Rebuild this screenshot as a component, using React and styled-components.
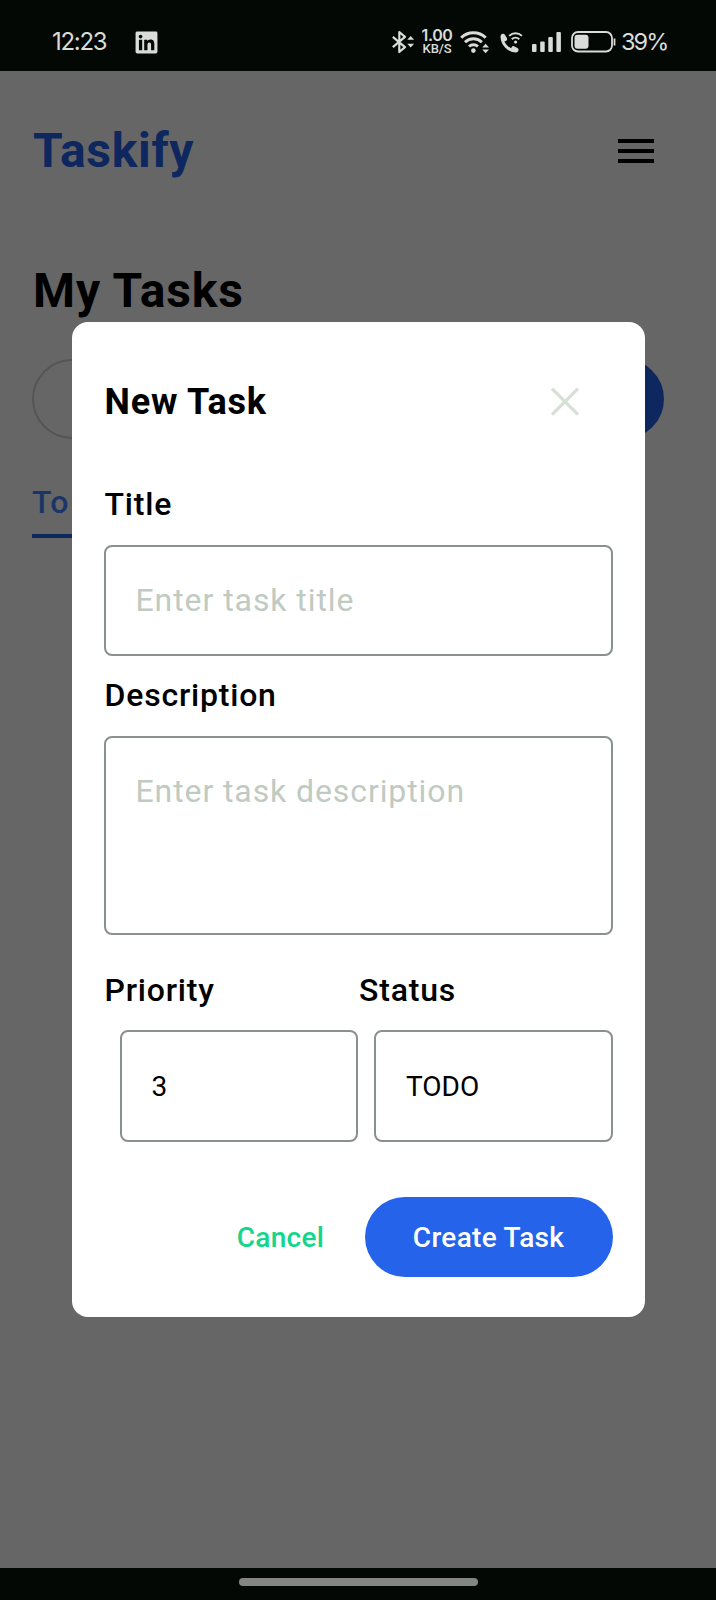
import React from "react";
import styled, { createGlobalStyle } from "styled-components";
import { FaLinkedin } from "react-icons/fa6";

const GlobalStyle = createGlobalStyle`
  * { box-sizing: border-box; }
  body { margin: 0; background: #040804; }
  button, input, textarea { font: inherit; }
`;

const Screen = styled.div`
  width: 716px;
  height: 1600px;
  display: flex;
  flex-direction: column;
  overflow: hidden;
  background: #040804;
  font-family: Roboto, sans-serif;
  color: #000;
`;

const StatusBar = styled.header`
  flex: none;
  height: 71px;
  padding: 13px 49px 0 52px;
  display: flex;
  align-items: center;
  justify-content: space-between;
  color: #d9dcd9;
  font-family: Inter, sans-serif;
  font-size: 24px;
  line-height: 30px;
`;

const StatusGroup = styled.div`
  display: flex;
  align-items: center;
`;

const StatusItem = styled.div`
  display: flex;
  margin-left: ${(p) => p.$before || 0}px;
`;

const Clock = styled.span`
  width: 56px;
  letter-spacing: -1.3px;
  white-space: nowrap;
`;

const NetSpeed = styled.div`
  width: 32px;
  display: flex;
  flex-direction: column;
  align-items: center;
  white-space: nowrap;
`;

const SpeedValue = styled.span`
  font-size: 16px;
  line-height: 13px;
  font-weight: 600;
  letter-spacing: -0.4px;
`;

const SpeedUnit = styled.span`
  font-family: Roboto, sans-serif;
  font-size: 13px;
  line-height: 13px;
  font-weight: 500;
  letter-spacing: -0.1px;
`;

const BatteryLevel = styled.span`
  width: 46px;
  font-size: 23.5px;
  letter-spacing: -1.9px;
  white-space: nowrap;
`;

const AppArea = styled.main`
  position: relative;
  flex: 1;
  background: #fff;
  padding: 0 32px;
`;

const TopBar = styled.div`
  height: 159px;
  padding: 0 24px 0 1px;
  display: flex;
  align-items: center;
  justify-content: space-between;
`;

const Brand = styled.h1`
  margin: 0;
  font-size: 48px;
  line-height: 64px;
  font-weight: 700;
  letter-spacing: 0.7px;
  color: #2563eb;
`;

const Heading = styled.h2`
  margin: 29px 0 36px 1px;
  font-size: 48px;
  line-height: 64px;
  font-weight: 700;
  letter-spacing: 0.9px;
`;

const ActionRow = styled.div`
  display: flex;
  gap: 16px;
  padding-right: 20px;
`;

const ActionPill = styled.div`
  flex: 1;
  height: 80px;
  border-radius: 40px;
  border: 2px solid ${(p) => (p.$filled ? "#2563eb" : "#d4d4d4")};
  background: ${(p) => (p.$filled ? "#2563eb" : "transparent")};
`;

const Tab = styled.div`
  width: 120px;
  margin-top: 31px;
  padding-top: 8px;
  height: 68px;
  border-bottom: 4px solid #2563eb;
  font-size: 32px;
  line-height: 48px;
  font-weight: 500;
  letter-spacing: 0.8px;
  color: #4484ff;
  white-space: nowrap;
`;

const Scrim = styled.div`
  position: absolute;
  inset: 0;
  display: flex;
  align-items: center;
  justify-content: center;
  background: rgba(0, 0, 0, 0.6);
`;

const Dialog = styled.form`
  width: 573px;
  height: 995px;
  padding: 33px 32px 40px;
  border-radius: 16px;
  background: #fff;
  display: flex;
  flex-direction: column;
`;

const DialogHeader = styled.div`
  height: 94px;
  margin-bottom: 31px;
  padding: 0 24px 0 1px;
  display: flex;
  align-items: center;
  justify-content: space-between;
`;

const DialogTitle = styled.h3`
  margin: 0;
  font-size: 36px;
  line-height: 48px;
  font-weight: 700;
  letter-spacing: 0.8px;
`;

const FieldGroup = styled.div`
  display: flex;
  flex-direction: column;
  flex: ${(p) => (p.$half ? "1" : "none")};
  margin-bottom: ${(p) => p.$gap || 0}px;
`;

const Label = styled.label`
  font-size: 32px;
  line-height: 48px;
  font-weight: 500;
  letter-spacing: 0.8px;
  padding-left: 1px;
  margin-bottom: ${(p) => p.$gap || 17}px;
`;

const inputBox = `
  display: block;
  width: 100%;
  border: 2px solid #89908d;
  border-radius: 8px;
  background: transparent;
  outline: none;
  resize: none;
  color: #000;
  &::placeholder { color: #bfcac1; opacity: 1; }
`;

const TextInput = styled.input`
  ${inputBox}
  height: 111px;
  padding: 0 30px 1px;
  font-size: 32px;
  letter-spacing: 0.93px;
`;

const TextArea = styled.textarea`
  ${inputBox}
  height: 199px;
  padding: 29px 30px;
  font-size: 32px;
  line-height: 48px;
  letter-spacing: 0.9px;
`;

const SelectBox = styled.div`
  ${inputBox}
  width: auto;
  height: 112px;
  margin-left: 16px;
  padding: 2px 30px 0;
  display: flex;
  align-items: center;
  font-size: 28px;
  line-height: 40px;
`;

const FieldRow = styled.div`
  display: flex;
  margin-bottom: 55px;
`;

const Actions = styled.div`
  display: flex;
  justify-content: flex-end;
  align-items: center;
`;

const Button = styled.button`
  height: 80px;
  border: 0;
  border-radius: 40px;
  padding: 0;
  width: ${(p) => (p.$primary ? 248 : 168)}px;
  background: ${(p) => (p.$primary ? "#2563eb" : "transparent")};
  color: ${(p) => (p.$primary ? "#fff" : "#13d68c")};
  font-size: 28px;
  font-weight: 500;
  letter-spacing: 0.3px;
`;

const NavBar = styled.footer`
  flex: none;
  height: 32px;
  padding-top: 10px;
  display: flex;
  justify-content: center;
`;

const GestureHandle = styled.div`
  width: 239px;
  height: 8px;
  border-radius: 4px;
  background: #838682;
`;

const BluetoothIcon = () => (
  <svg width="23" height="24" viewBox="0 0 23 24" fill="none" stroke="currentColor" strokeWidth="2.2">
    <path d="M0.800 6.800 13 17.200 7.300 22V2L13 6.800 0.800 17.200" strokeLinejoin="round" />
    <path d="M15.300 9.800 18.700 6l3.400 3.800zM15.300 13.800 18.700 17.600l3.400-3.800z" fill="currentColor" stroke="none" />
  </svg>
);

const WifiIcon = () => (
  <svg width="29" height="24" viewBox="0 0 29 24" fill="none" stroke="currentColor" strokeWidth="3">
    <path d="M1.200 7.800a17.500 17.500 0 0 1 24.500 0M5 12.200a12 12 0 0 1 16.900 0M9 16.500a6.500 6.500 0 0 1 8.900 0" />
    <circle cx="13.400" cy="20.600" r="2.300" fill="currentColor" stroke="none" />
    <path d="M22.200 17.500 25.600 13.800l3.400 3.700zM22.200 19.500 25.600 23.200l3.400-3.700z" fill="currentColor" stroke="none" />
  </svg>
);

const WifiCallIcon = () => (
  <svg width="23" height="23" viewBox="0 0 23 23" fill="none" stroke="currentColor">
    <path d="M2 6C2.500 13.500 8 19.200 15.500 20" strokeWidth="3" strokeLinecap="round" />
    <path d="M3 5 4.800 8M13.500 17.400 16.300 18.900" strokeWidth="4.400" strokeLinecap="round" />
    <path d="M9.200 4.800a9 9 0 0 1 12.700 0M11.800 8.200a5.400 5.400 0 0 1 7.500 0" strokeWidth="1.900" />
    <circle cx="15.600" cy="11" r="1.600" fill="currentColor" stroke="none" />
  </svg>
);

const SignalIcon = () => (
  <svg width="29" height="20" viewBox="0 0 29 20" fill="currentColor">
    <rect x="0" y="12" width="4.500" height="8" rx="1" />
    <rect x="8.200" y="9.500" width="4.500" height="10.500" rx="1" />
    <rect x="16.300" y="5" width="4.500" height="15" rx="1" />
    <rect x="24.400" y="0" width="4.500" height="20" rx="1" />
  </svg>
);

const BatteryIcon = () => (
  <svg width="45" height="22" viewBox="0 0 45 22" fill="none">
    <rect x="1" y="1" width="40" height="19.500" rx="6" stroke="currentColor" strokeWidth="1.800" />
    <rect x="3.500" y="3.800" width="14" height="14" rx="3" fill="currentColor" />
    <path d="M43.500 7.500v7" stroke="currentColor" strokeWidth="1.800" />
  </svg>
);

const MenuIcon = () => (
  <svg width="48" height="48" viewBox="0 0 24 24" fill="#000">
    <path d="M3 18h18v-2H3v2zm0-5h18v-2H3v2zm0-7v2h18V6H3z" />
  </svg>
);

const CloseIcon = () => (
  <svg width="48" height="48" viewBox="0 0 24 24" fill="none" stroke="#d7e0d7" strokeWidth="1.600">
    <path d="M5.500 5.300l13 13M18.500 5.300l-13 13" />
  </svg>
);

export default function App() {
  return (
    <Screen>
      <GlobalStyle />
      <StatusBar>
        <StatusGroup>
          <Clock>12:23</Clock>
          <StatusItem $before={26}>
            <FaLinkedin size={25} />
          </StatusItem>
        </StatusGroup>
        <StatusGroup>
          <StatusItem>
            <BluetoothIcon />
          </StatusItem>
          <StatusItem $before={6}>
            <NetSpeed>
              <SpeedValue>1.00</SpeedValue>
              <SpeedUnit>KB/S</SpeedUnit>
            </NetSpeed>
          </StatusItem>
          <StatusItem $before={7}>
            <WifiIcon />
          </StatusItem>
          <StatusItem $before={11}>
            <WifiCallIcon />
          </StatusItem>
          <StatusItem $before={9}>
            <SignalIcon />
          </StatusItem>
          <StatusItem $before={10}>
            <BatteryIcon />
          </StatusItem>
          <StatusItem $before={5}>
            <BatteryLevel>39%</BatteryLevel>
          </StatusItem>
        </StatusGroup>
      </StatusBar>

      <AppArea>
        <TopBar>
          <Brand>Taskify</Brand>
          <MenuIcon />
        </TopBar>
        <Heading>My Tasks</Heading>
        <ActionRow>
          <ActionPill />
          <ActionPill $filled />
        </ActionRow>
        <Tab>To</Tab>

        <Scrim>
          <Dialog>
            <DialogHeader>
              <DialogTitle>New Task</DialogTitle>
              <CloseIcon />
            </DialogHeader>
            <FieldGroup $gap={15}>
              <Label>Title</Label>
              <TextInput placeholder="Enter task title" />
            </FieldGroup>
            <FieldGroup $gap={31}>
              <Label>Description</Label>
              <TextArea placeholder="Enter task description" />
            </FieldGroup>
            <FieldRow>
              <FieldGroup $half>
                <Label $gap={16}>Priority</Label>
                <SelectBox>3</SelectBox>
              </FieldGroup>
              <FieldGroup $half>
                <Label $gap={16}>Status</Label>
                <SelectBox>TODO</SelectBox>
              </FieldGroup>
            </FieldRow>
            <Actions>
              <Button type="button">Cancel</Button>
              <Button type="button" $primary>
                Create Task
              </Button>
            </Actions>
          </Dialog>
        </Scrim>
      </AppArea>

      <NavBar>
        <GestureHandle />
      </NavBar>
    </Screen>
  );
}
